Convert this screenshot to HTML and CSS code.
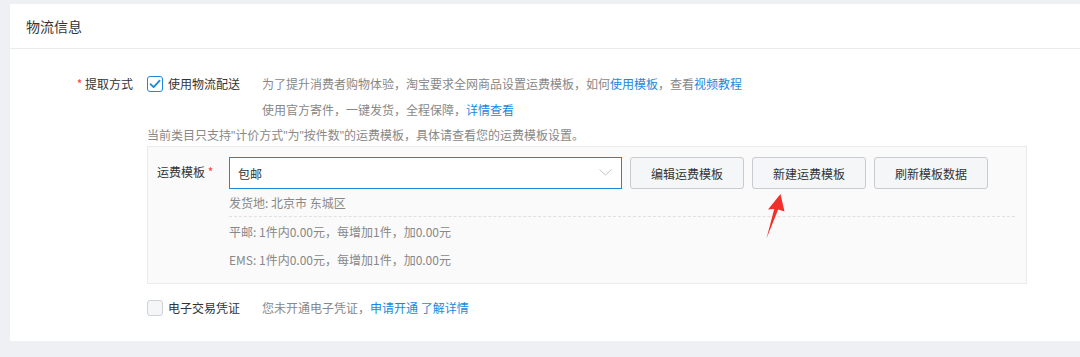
FILE: index.html
```html
<!DOCTYPE html>
<html lang="zh-CN">
<head>
<meta charset="utf-8">
<title>物流信息</title>
<link rel="stylesheet" href="styles.css">
</head>
<body>
<div class="card">
  <div class="card-header">物流信息</div>
  <div class="card-body">
    <div class="form-row">
      <div class="form-label"><span class="req">*</span> 提取方式</div>
      <div class="form-content">
        <div class="opt-line">
          <label class="check-group">
            <span class="checkbox checked">
              <svg width="12" height="10" viewBox="0 0 12 10"><path d="M1.5 5.2 L4.6 8.2 L10.6 1.6" fill="none" stroke="#1a88dc" stroke-width="1.8" stroke-linecap="round" stroke-linejoin="round"/></svg>
            </span>
            <span class="check-text">使用物流配送</span>
          </label>
          <div class="notes">
            <div class="note">为了提升消费者购物体验，淘宝要求全网商品设置运费模板，如何<a class="link">使用模板</a>，查看<a class="link">视频教程</a></div>
            <div class="note">使用官方寄件，一键发货，全程保障，<a class="link">详情查看</a></div>
          </div>
        </div>
        <div class="tip">当前类目只支持"计价方式"为"按件数"的运费模板，具体请查看您的运费模板设置。</div>
        <div class="tpl-box">
          <div class="tpl-row">
            <div class="tpl-label">运费模板 <span class="req">*</span></div>
            <div class="select">
              <span class="select-text">包邮</span>
              <svg class="chev" width="13" height="7" viewBox="0 0 13 7"><path d="M0.5 0.5 L6.5 6 L12.5 0.5" fill="none" stroke="#c4c4c4" stroke-width="1"/></svg>
            </div>
            <button class="btn">编辑运费模板</button>
            <button class="btn">新建运费模板</button>
            <button class="btn">刷新模板数据</button>
          </div>
          <div class="tpl-info">
            <div class="info-origin">发货地: 北京市 东城区</div>
            <div class="info-fees">
              <div class="info-line">平邮: 1件内0.00元，每增加1件，加0.00元</div>
              <div class="info-line">EMS: 1件内0.00元，每增加1件，加0.00元</div>
            </div>
          </div>
        </div>
      </div>
    </div>
    <div class="form-row row-second">
      <div class="form-label"></div>
      <div class="form-content">
        <div class="opt-line">
          <label class="check-group">
            <span class="checkbox"></span>
            <span class="check-text">电子交易凭证</span>
          </label>
          <div class="notes">
            <div class="note">您未开通电子凭证，<a class="link">申请开通</a> <a class="link">了解详情</a></div>
          </div>
        </div>
      </div>
    </div>
  </div>
  <svg class="arrow" width="30" height="54" viewBox="0 0 30 54"><polygon points="20.5,4 24.5,21.5 18.2,19.6 6.5,48.5 14.2,19 8,19.5" fill="#f2302b"/></svg>
</div>
</body>
</html>
```

FILE: styles.css
```css
html, body {
  margin: 0;
  padding: 0;
}
body {
  background: #eef0f3;
  font-family: "Noto Sans CJK SC", "Liberation Sans", sans-serif;
  font-size: 12px;
  color: #333;
  height: 357px;
  overflow: hidden;
}
.card {
  position: relative;
  margin: 4px 0 0 10px;
  background: #fff;
}
.card-header {
  height: 44px;
  line-height: 44px;
  padding-left: 16px;
  font-size: 14px;
  color: #333;
  border-bottom: 1px solid #e9eaec;
}
.card-body {
  padding: 22px 0 20px 0;
}
.form-row {
  display: flex;
  gap: 14px;
}
.row-second {
  margin-top: 11px;
}
.form-label {
  width: 123px;
  flex: none;
  text-align: right;
  line-height: 26px;
  color: #333;
}
.req {
  color: #f5413a;
}
.form-content {
  flex: none;
  width: 880px;
}
.opt-line {
  display: flex;
}
.check-group {
  width: 115px;
  flex: none;
  display: flex;
  align-items: center;
  height: 26px;
  gap: 5px;
}
.checkbox {
  box-sizing: border-box;
  width: 16px;
  height: 16px;
  border: 1px solid #cfd2d6;
  border-radius: 3px;
  background: #f5f6f8;
  display: flex;
  align-items: center;
  justify-content: center;
}
.checkbox.checked {
  border-color: #1a88dc;
  background: #fff;
}
.check-text {
  color: #333;
  line-height: 26px;
}
.notes {
  color: #888;
}
.note {
  line-height: 26px;
}
.link {
  color: #1a88dc;
  text-decoration: none;
}
.tip {
  margin-top: 3px;
  line-height: 20px;
  color: #888;
  font-family: "Liberation Sans", "Noto Sans CJK SC", sans-serif;
}
.tpl-box {
  box-sizing: border-box;
  width: 880px;
  border: 1px solid #ebebeb;
  background: #fafafa;
  padding: 10px 11px 9px 9px;
}
.tpl-row {
  display: flex;
  align-items: center;
  gap: 8px;
  height: 32px;
}
.tpl-label {
  width: 64px;
  flex: none;
  color: #333;
  line-height: 26px;
  margin-top: -3px;
}
.select {
  box-sizing: border-box;
  width: 393px;
  height: 32px;
  border: 1px solid #1a88dc;
  background: #fff;
  display: flex;
  align-items: center;
  justify-content: space-between;
  padding: 0 9px 0 8px;
}
.select-text {
  color: #333;
}
.chev {
  display: block;
  margin-top: -2px;
}
.btn {
  box-sizing: border-box;
  width: 114px;
  height: 32px;
  border: 1px solid #c9cbcf;
  border-radius: 3px;
  background: #f5f6f8;
  color: #333;
  font-family: inherit;
  font-size: 12px;
  padding: 0;
  margin: 0;
}
.tpl-info {
  margin-left: 72px;
  color: #888;
}
.info-origin {
  margin-top: 1px;
  line-height: 26px;
  border-bottom: 1px dashed #e0e0e0;
}
.info-fees {
  padding-top: 1px;
}
.info-line {
  line-height: 28px;
}
.arrow {
  position: absolute;
  left: 750px;
  top: 186px;
}
```
